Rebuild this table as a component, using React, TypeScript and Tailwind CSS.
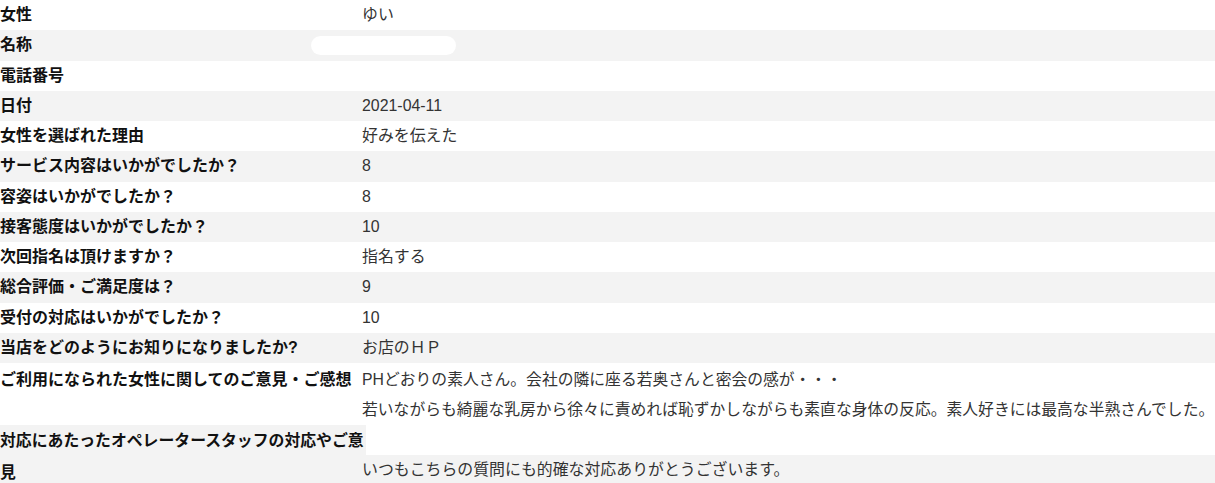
const rows: { label: string; value: string }[] = [
  { label: "女性", value: "ゆい" },
  { label: "名称", value: "" },
  { label: "電話番号", value: "" },
  { label: "日付", value: "2021-04-11" },
  { label: "女性を選ばれた理由", value: "好みを伝えた" },
  { label: "サービス内容はいかがでしたか？", value: "8" },
  { label: "容姿はいかがでしたか？", value: "8" },
  { label: "接客態度はいかがでしたか？", value: "10" },
  { label: "次回指名は頂けますか？", value: "指名する" },
  { label: "総合評価・ご満足度は？", value: "9" },
  { label: "受付の対応はいかがでしたか？", value: "10" },
  { label: "当店をどのようにお知りになりましたか?", value: "お店のＨＰ" },
];

export default function App() {
  return (
    <div className="w-[1215px] h-[483px] overflow-hidden bg-white font-['Liberation_Sans','Noto_Sans_CJK_JP',sans-serif]">
      <dl className="flex flex-col">
        {rows.map((row, i) => (
          <div
            key={row.label}
            className={`relative flex h-[30.25px] items-center ${i % 2 === 1 ? "bg-[#f3f3f3]" : "bg-white"}`}
          >
            <dt className="w-[362px] shrink-0 whitespace-nowrap text-[16px] font-bold text-[#111]">{row.label}</dt>
            <dd className="flex-1 text-[15.9px] text-[#333]">{row.value}</dd>
            {row.label === "名称" && (
              <span className="absolute left-[311px] top-[6px] h-[19px] w-[145px] rounded-full bg-white" />
            )}
          </div>
        ))}

        <div className="flex bg-white pt-[2px] leading-[30px]">
          <dt className="w-[362px] shrink-0 whitespace-nowrap text-[16px] font-bold text-[#111]">
            ご利用になられた女性に関してのご意見・ご感想
          </dt>
          <dd className="flex-1 whitespace-nowrap text-[15.8px] text-[#333]">
            <p>PHどおりの素人さん。会社の隣に座る若奥さんと密会の感が・・・</p>
            <p>若いながらも綺麗な乳房から徐々に責めれば恥ずかしながらも素直な身体の反応。素人好きには最高な半熟さんでした。</p>
          </dd>
        </div>

        <div className="flex">
          <dt className="w-[366px] shrink-0 bg-[#f3f3f3] text-[15.85px] font-bold leading-[32px] text-[#111]">
            対応にあたったオペレータースタッフの対応やご意見
          </dt>
          <dd className="flex flex-1 flex-col text-[15.9px] text-[#333]">
            <div className="h-[30px] bg-white" />
            <p className="-ml-[4px] bg-[#f3f3f3] leading-[30px]">いつもこちらの質問にも的確な対応ありがとうございます。</p>
          </dd>
        </div>
      </dl>
    </div>
  );
}
